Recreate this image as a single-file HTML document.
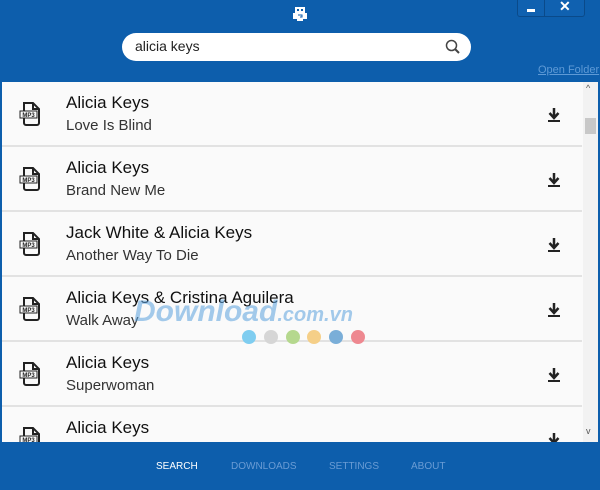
<!DOCTYPE html>
<html><head><meta charset="utf-8"><style>
*{margin:0;padding:0;box-sizing:border-box}
body{width:600px;height:490px;overflow:hidden;background:#0d5eac;font-family:"Liberation Sans",Tahoma,sans-serif;position:relative}
.hdr{position:absolute;left:0;top:0;width:600px;height:82px;background:#0d5eac}
.btns{position:absolute;left:517px;top:0;width:68px;height:17px;border:1px solid #0a4a8a;border-top:none;background:#1061b0;border-radius:0 0 3px 3px}
.btns .sep{position:absolute;left:26px;top:0;width:1px;height:16px;background:#0a4a8a}
.min{position:absolute;left:9px;top:9px;width:8px;height:3px;background:#fff}
.x{position:absolute;left:41px;top:-2px;color:#fff;font-weight:bold;font-size:14px}
.search{position:absolute;left:122px;top:33px;width:349px;height:28px;background:#fff;border-radius:14px;font-size:14px;color:#222;padding:5px 0 0 13px}
.of{position:absolute;left:538px;top:64px;font-size:11px;color:#5e9ad6;text-decoration:underline}
.list{position:absolute;left:2px;top:82px;width:596px;height:360px;background:#fafafa;overflow:hidden}
.row{position:absolute;left:0;width:580px;height:65px;border-bottom:2px solid #e2e2e2}
.t1{position:absolute;left:64px;top:11px;font-size:17px;color:#111}
.t2{position:absolute;left:64px;top:35px;font-size:15px;color:#333}
.ic{position:absolute;left:17px;top:19px}
.dl{position:absolute;left:545px;top:25px}
.sb{position:absolute;left:581px;top:0;width:15px;height:360px;background:#f2f2f2}
.foot{position:absolute;left:0;top:442px;width:600px;height:48px;background:#0d5eac;font-size:10px}
.foot span{position:absolute;top:19px;color:#6a9cd4}
.wm{position:absolute;left:134px;top:295px;font:italic bold 30px "Liberation Sans",sans-serif;color:rgba(90,160,220,.55)}
.dot{position:absolute;top:330px;width:14px;height:14px;border-radius:7px}
</style></head><body>
<div class="hdr">
<svg style="position:absolute;left:292px;top:6px" width="16" height="16" viewBox="0 0 16 16"><rect x="3" y="1" width="10" height="6" fill="#fff"/><rect x="5" y="3" width="2" height="2" fill="#0d5eac"/><rect x="9" y="3" width="2" height="2" fill="#0d5eac"/><rect x="1" y="7" width="14" height="6" fill="#fff"/><path d="M6 9h4v2h-2" stroke="#0d5eac" fill="none"/><rect x="5" y="13" width="6" height="2" fill="#fff"/></svg>
<div class="btns"><div class="sep"></div><div class="min"></div><div class="x">✕</div></div>
<div class="search">alicia keys
<svg style="position:absolute;left:323px;top:6px" width="16" height="16" viewBox="0 0 16 16"><circle cx="6.5" cy="6.5" r="5" stroke="#444" stroke-width="1.5" fill="none"/><path d="M10 10l4 4" stroke="#444" stroke-width="2"/></svg></div>
<div class="of">Open Folder</div>
</div>
<div class="list">
<div class="row" style="top:0"><div class="t1">Alicia Keys</div><div class="t2">Love Is Blind</div></div>
<div class="row" style="top:65px"><div class="t1">Alicia Keys</div><div class="t2">Brand New Me</div></div>
<div class="row" style="top:130px"><div class="t1">Jack White &amp; Alicia Keys</div><div class="t2">Another Way To Die</div></div>
<div class="row" style="top:195px"><div class="t1">Alicia Keys &amp; Cristina Aguilera</div><div class="t2">Walk Away</div></div>
<div class="row" style="top:260px"><div class="t1">Alicia Keys</div><div class="t2">Superwoman</div></div>
<div class="row" style="top:325px"><div class="t1">Alicia Keys</div><div class="t2"></div></div>
<div class="sb"><div style="position:absolute;left:2px;top:36px;width:11px;height:16px;background:#c8c8c8"></div><div style="position:absolute;left:3px;top:1px;font-size:9px;color:#555">^</div><div style="position:absolute;left:3px;top:344px;font-size:9px;color:#555">v</div></div>
</div>
<div class="wm">Download<span style="font-size:20px">.com.vn</span></div>
<div class="dot" style="left:242px;background:#7fcdf0"></div>
<div class="dot" style="left:264px;background:#d6d6d6"></div>
<div class="dot" style="left:286px;background:#b5d88e"></div>
<div class="dot" style="left:307px;background:#f5cf88"></div>
<div class="dot" style="left:329px;background:#7aaed8"></div>
<div class="dot" style="left:351px;background:#ee8890"></div>
<div class="foot"><span style="left:156px;color:#fff">SEARCH</span><span style="left:231px">DOWNLOADS</span><span style="left:329px">SETTINGS</span><span style="left:411px">ABOUT</span></div>
<script>
document.querySelectorAll('.row').forEach(r=>{
r.insertAdjacentHTML('beforeend','<svg class="ic" width="24" height="26" viewBox="0 0 24 26"><path d="M5 2h9l6 6v14a2 2 0 0 1-2 2H7a2 2 0 0 1-2-2z M14 2v6h6" stroke="#222" stroke-width="2" fill="none"/><rect x="1" y="10" width="17" height="7" fill="#fafafa" stroke="#222"/><text x="9.5" y="16" font-size="6" font-weight="bold" text-anchor="middle" fill="#222" font-family="Liberation Sans">MP3</text></svg><svg class="dl" width="14" height="16" viewBox="0 0 14 16"><path d="M7 1v9M2.5 6l4.5 5 4.5-5" stroke="#222" stroke-width="2.5" fill="none"/><rect x="1" y="13" width="12" height="2" fill="#222"/></svg>');
});
</script>
</body></html>
